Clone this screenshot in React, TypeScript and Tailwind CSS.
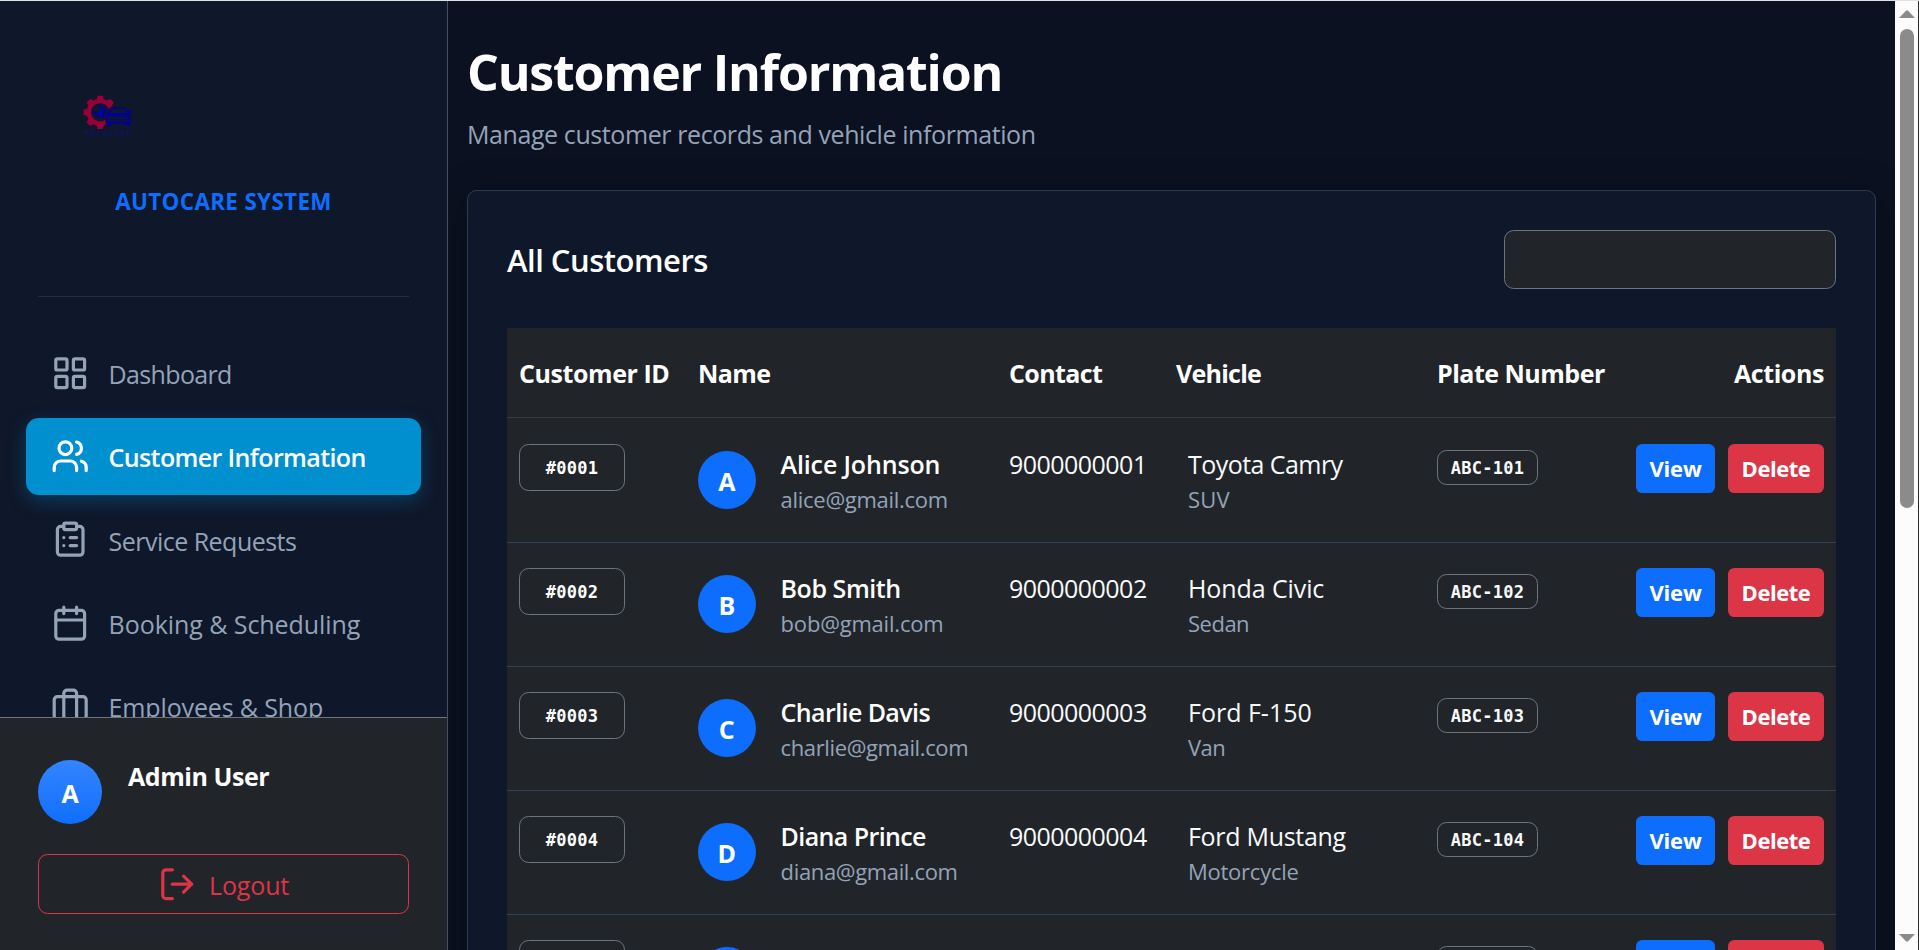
import type { ReactNode } from "react";

type NavItem = { label: string; tracking: string; icon: ReactNode; active?: boolean };

type Customer = {
  id: string;
  name: string;
  nameTracking: string;
  email: string;
  emailTracking: string;
  phone: string;
  vehicle: string;
  vehicleTracking: string;
  kind: string;
  kindTracking: string;
  plate: string;
};

function Icon({ children }: { children: ReactNode }) {
  return (
    <svg
      viewBox="0 0 24 24"
      className="size-[38.4px] shrink-0"
      fill="none"
      stroke="currentColor"
      strokeWidth={2}
      strokeLinecap="round"
      strokeLinejoin="round"
    >
      {children}
    </svg>
  );
}

const navItems: NavItem[] = [
  {
    label: "Dashboard",
    tracking: "tracking-[-0.65px]",
    icon: (
      <Icon>
        <rect x="3" y="3" width="7" height="7" rx="1" />
        <rect x="14" y="3" width="7" height="7" rx="1" />
        <rect x="14" y="14" width="7" height="7" rx="1" />
        <rect x="3" y="14" width="7" height="7" rx="1" />
      </Icon>
    ),
  },
  {
    label: "Customer Information",
    tracking: "tracking-[-0.62px]",
    active: true,
    icon: (
      <Icon>
        <path d="M16 21v-2a4 4 0 0 0-4-4H6a4 4 0 0 0-4 4v2" />
        <circle cx="9" cy="7" r="4" />
        <path d="M22 21v-2a4 4 0 0 0-3-3.87" />
        <path d="M16 3.13a4 4 0 0 1 0 7.75" />
      </Icon>
    ),
  },
  {
    label: "Service Requests",
    tracking: "tracking-[-0.52px]",
    icon: (
      <Icon>
        <rect x="8" y="2" width="8" height="4" rx="1" />
        <path d="M16 4h2a2 2 0 0 1 2 2v14a2 2 0 0 1-2 2H6a2 2 0 0 1-2-2V6a2 2 0 0 1 2-2h2" />
        <path d="M12 11h4M12 16h4M8 11h.01M8 16h.01" />
      </Icon>
    ),
  },
  {
    label: "Booking & Scheduling",
    tracking: "tracking-[-0.06px]",
    icon: (
      <Icon>
        <path d="M8 2v4M16 2v4M3 10h18" />
        <rect x="3" y="4" width="18" height="18" rx="2" />
      </Icon>
    ),
  },
  {
    label: "Employees & Shop",
    tracking: "tracking-[-0.14px]",
    icon: (
      <Icon>
        <path d="M16 20V4a2 2 0 0 0-2-2h-4a2 2 0 0 0-2 2v16" />
        <rect x="2" y="6" width="20" height="14" rx="2" />
      </Icon>
    ),
  },
];

const customers: Customer[] = [
  { id: "#0001", name: "Alice Johnson", nameTracking: "tracking-[-0.15px]", email: "alice@gmail.com", emailTracking: "tracking-[-0.28px]", phone: "9000000001", vehicle: "Toyota Camry", vehicleTracking: "tracking-[-0.55px]", kind: "SUV", kindTracking: "tracking-[0.2px]", plate: "ABC-101" },
  { id: "#0002", name: "Bob Smith", nameTracking: "tracking-[-0.45px]", email: "bob@gmail.com", emailTracking: "tracking-[-0.2px]", phone: "9000000002", vehicle: "Honda Civic", vehicleTracking: "tracking-[-0.1px]", kind: "Sedan", kindTracking: "tracking-[-0.5px]", plate: "ABC-102" },
  { id: "#0003", name: "Charlie Davis", nameTracking: "tracking-[-0.6px]", email: "charlie@gmail.com", emailTracking: "tracking-[-0.38px]", phone: "9000000003", vehicle: "Ford F-150", vehicleTracking: "tracking-[0px]", kind: "Van", kindTracking: "tracking-[-0.5px]", plate: "ABC-103" },
  { id: "#0004", name: "Diana Prince", nameTracking: "tracking-[-0.6px]", email: "diana@gmail.com", emailTracking: "tracking-[-0.35px]", phone: "9000000004", vehicle: "Ford Mustang", vehicleTracking: "tracking-[-0.3px]", kind: "Motorcycle", kindTracking: "tracking-[-0.25px]", plate: "ABC-104" },
  { id: "#0005", name: "Ethan Brown", nameTracking: "tracking-[-0.3px]", email: "ethan@gmail.com", emailTracking: "tracking-[-0.2px]", phone: "9000000005", vehicle: "BMW X5", vehicleTracking: "tracking-[0px]", kind: "SUV", kindTracking: "tracking-[0.2px]", plate: "ABC-105" },
];

const gearTeeth = [0, 45, 90, 135, 180, 225, 270, 315];

function Logo() {
  return (
    <svg viewBox="0 0 50 42" className="h-[42px] w-[50px]">
      <g transform="translate(18.2 18.3)">
        <g fill="#99003a">
          {gearTeeth.map((a) => (
            <path key={a} d="M-3.9-11.5 -2.7-16.6H2.7L3.9-11.5Z" transform={`rotate(${a})`} />
          ))}
        </g>
        <circle r="11.4" fill="none" stroke="#99003a" strokeWidth="4.4" />
      </g>
      <path d="M23.5 18 29 12.5h11l9 4v15l-25.5 1Z" fill="#0f172a" />
      <path
        d="M11.2 16.2a6 6 0 0 0 7 6.3q2.6-.4 4.3 3.3l.5-9.6a5.8 5.8 0 0 0-7.4-5.1l3 3-.8 3.2-3.4.7Z"
        fill="#00009a"
      />
      <g fill="none" stroke="#00009a" strokeLinecap="round" strokeLinejoin="round">
        <path d="M26.5 18.5 31.3 14h10.4L46.5 18.5" strokeWidth="1.5" />
        <path d="M24.5 16.5l2 1.2M48.5 16.5l-2 1.2" strokeWidth="1.8" />
        <path d="M26 20.8h21" strokeWidth="3.8" />
        <path d="M24.6 23.6v5M48.2 23.6v5" strokeWidth="1.6" />
        <path d="M25 25.4h4M44 25.4h4" strokeWidth="1.3" />
        <path d="M30 25.9h13" strokeWidth="1.2" strokeOpacity="0.35" />
        <path d="M26.5 28.8h20" strokeWidth="2.6" />
        <path d="M25.6 30.6h2.4M45 30.6h2.4" strokeWidth="2.2" />
      </g>
      <text
        x="3.5"
        y="40.8"
        textLength="45"
        fontSize="5.6"
        fontWeight="700"
        fill="#0a0f8c"
        fontFamily="Open Sans, sans-serif"
      >
        AUTOCARE
      </text>
    </svg>
  );
}

function Sidebar() {
  return (
    <aside className="flex w-[448px] shrink-0 flex-col border-r border-[#475060] bg-[#0f172a]">
      <div className="flex min-h-0 flex-1 flex-col overflow-hidden">
        <div className="mx-[38px] flex h-[296px] shrink-0 flex-col border-b border-[#252d3d] pt-[93px]">
          <div className="pl-[44px]">
            <Logo />
          </div>
          <div className="mt-[49px] text-center text-[22.4px] leading-[34px] font-bold tracking-[0.35px] text-[#0d6efd]">
            AUTOCARE SYSTEM
          </div>
        </div>
        <nav className="flex flex-col gap-[6.4px] px-[26px] pt-[37.8px]">
          {navItems.map((item) => (
            <div
              key={item.label}
              className={
                "flex h-[76.8px] shrink-0 items-center gap-[19.2px] rounded-[12.8px] px-[25px] " +
                (item.active
                  ? "bg-[#008fcf] font-semibold text-white shadow-[0_6px_19px_rgba(0,143,207,0.3)]"
                  : "text-[#94a3b8]")
              }
            >
              {item.icon}
              <span className={"pt-[2px] text-[25px] leading-[38px] whitespace-nowrap " + item.tracking}>
                {item.label}
              </span>
            </div>
          ))}
        </nav>
      </div>
      <div className="h-[233px] shrink-0 border-t border-[#6c757d] bg-[#212529] px-[38px] pt-[42px]">
        <div className="flex gap-[26px]">
          <div className="flex size-16 items-center justify-center rounded-full bg-linear-to-b from-[#3385ff] to-[#0d6efd] pt-[4px] text-[25px] font-bold text-white">
            A
          </div>
          <div className="text-[25px] leading-[33px] font-bold tracking-[-0.45px] text-white">
            Admin User
          </div>
        </div>
        <div className="mt-[30px] flex h-[60px] items-center justify-center gap-[12.8px] rounded-[9.6px] border border-[#dc3545] text-[#dc3545]">
          <Icon>
            <path d="M9 21H5a2 2 0 0 1-2-2V5a2 2 0 0 1 2-2h4" />
            <path d="m16 17 5-5-5-5" />
            <path d="M21 12H9" />
          </Icon>
          <span className="pt-[2px] text-[25px] leading-[38px] tracking-[-0.15px]">Logout</span>
        </div>
      </div>
    </aside>
  );
}

const columns = "grid grid-cols-[179px_310px_167px_262px_1fr]";

function CustomerRow({ c }: { c: Customer }) {
  return (
    <div className={columns + " h-[124px] shrink-0 border-b border-[#334155] pt-[25px] first:h-[125px] first:pt-[26px]"}>
      <div className="pl-[12px]">
        <div className="flex h-[47px] w-[106px] items-center justify-center rounded-[9.6px] border border-[#6c757d] pt-[2px] font-['DejaVu_Sans_Mono',monospace] text-[17px] font-bold tracking-[0.3px] text-white">
          {c.id}
        </div>
      </div>
      <div className="flex pl-[12px]">
        <div className="mt-[7px] flex size-[57.6px] items-center justify-center rounded-full bg-[#0d6efd] pt-[3px] text-[25px] font-bold text-white">
          {c.name[0]}
        </div>
        <div className="pl-[25px]">
          <div className={"text-[25px] leading-[40px] font-semibold whitespace-nowrap text-white " + c.nameTracking}>
            {c.name}
          </div>
          <div className={"-mt-[1px] text-[22px] leading-[33px] whitespace-nowrap text-[#94a3b8] " + c.emailTracking}>
            {c.email}
          </div>
        </div>
      </div>
      <div className="pl-[13px] text-[25px] leading-[40px] tracking-[-0.53px] text-[#f8fafc]">{c.phone}</div>
      <div className="pl-[25px]">
        <div className={"text-[25px] leading-[40px] whitespace-nowrap text-[#f8fafc] " + c.vehicleTracking}>
          {c.vehicle}
        </div>
        <div className={"-mt-[1px] text-[22px] leading-[33px] text-[#94a3b8] " + c.kindTracking}>{c.kind}</div>
      </div>
      <div className="flex items-start justify-between pr-[12px] pl-[12px]">
        <div className="mt-[6px] flex h-[35px] w-[101px] items-center justify-center rounded-[9.6px] border border-[#6c757d] pt-[2px] font-['DejaVu_Sans_Mono',monospace] text-[17px] font-bold tracking-[0.3px] text-[#f8fafc]">
          {c.plate}
        </div>
        <div className="flex gap-[13px] text-[22px] font-bold text-white">
          <div className="flex h-[48.5px] w-[79px] items-center justify-center rounded-[6.4px] bg-[#0d6efd] tracking-[-0.2px]">
            View
          </div>
          <div className="flex h-[48.5px] w-[96px] items-center justify-center rounded-[6.4px] bg-[#dc3545] tracking-[-0.45px]">
            Delete
          </div>
        </div>
      </div>
    </div>
  );
}

function Main() {
  return (
    <main className="flex min-w-0 flex-1 flex-col overflow-hidden bg-[#0b1120] pr-[19px] pl-[19px]">
      <h1 className="mt-[41px] text-[50px] leading-[61px] font-bold tracking-[-1.2px] whitespace-nowrap text-white">
        Customer Information
      </h1>
      <p className="mt-[12px] text-[25px] leading-[38px] tracking-[-0.41px] text-[#94a3b8]">
        Manage customer records and vehicle information
      </p>
      <section className="mt-[37px] flex h-[1200px] shrink-0 flex-col rounded-[9.6px] border border-[#2f3c50] bg-[#0f172a] px-[39px] pt-[39px] shadow-[0_6px_38px_rgba(0,0,0,0.3)]">
        <div className="flex h-[59px] items-center justify-between">
          <h2 className="pt-[2px] text-[31px] font-semibold tracking-[-0.5px] text-white">All Customers</h2>
          <div className="h-[59px] w-[332px] rounded-[9.6px] border border-[#6c757d] bg-[#212529]" />
        </div>
        <div className="mt-[39px] flex-1 bg-[#212529]">
          <div
            className={
              columns +
              " h-[90px] items-center border-b border-[#373b3e] pt-[3px] text-[25px] font-bold whitespace-nowrap text-white"
            }
          >
            <div className="pl-[12px] tracking-[-0.42px]">Customer ID</div>
            <div className="pl-[12px] tracking-[-0.6px]">Name</div>
            <div className="pl-[13px] tracking-[-0.6px]">Contact</div>
            <div className="pl-[13px] tracking-[-0.75px]">Vehicle</div>
            <div className="flex justify-between px-[12px]">
              <span className="tracking-[-0.5px]">Plate Number</span>
              <span className="tracking-[-0.4px]">Actions</span>
            </div>
          </div>
          <div className="flex flex-col">
            {customers.map((c) => (
              <CustomerRow key={c.id} c={c} />
            ))}
          </div>
        </div>
      </section>
    </main>
  );
}

function Scrollbar() {
  return (
    <div className="flex w-6 shrink-0 flex-col items-center border-r border-[#2b2b2b] bg-[#fcfcfc] pt-[9px] pb-[8px]">
      <svg viewBox="0 0 16 8" className="h-2 w-4 shrink-0 fill-[#8b8b8b]">
        <path d="M0 8 7.2.6h1.6L16 8Z" />
      </svg>
      <div className="mt-[11px] h-[479px] w-[14px] rounded-full bg-[#8b8b8b]" />
      <svg viewBox="0 0 16 8" className="mt-auto h-2 w-4 shrink-0 fill-[#8b8b8b]">
        <path d="M0 0 7.2 7.4h1.6L16 0Z" />
      </svg>
    </div>
  );
}

export default function App() {
  return (
    <div className="flex h-[950px] w-full flex-col overflow-hidden border-t border-[#dfe1e5] bg-[#0b1120] font-['Open_Sans',sans-serif]">
      <div className="flex min-h-0 flex-1">
        <Sidebar />
        <Main />
        <Scrollbar />
      </div>
    </div>
  );
}
